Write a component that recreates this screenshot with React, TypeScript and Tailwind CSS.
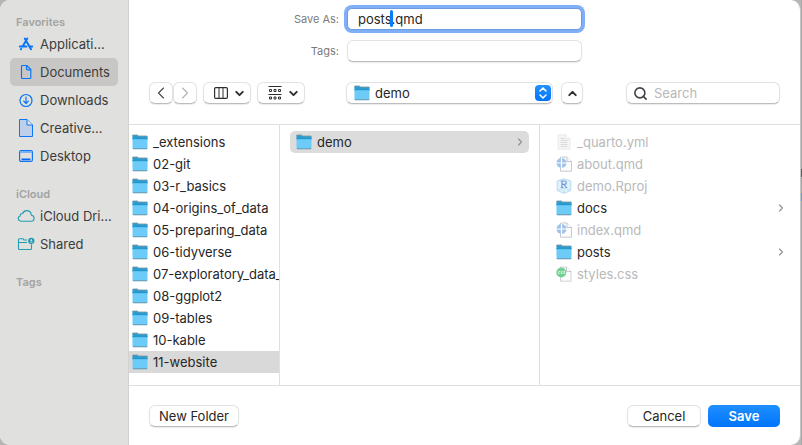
import React from "react";
import { ChevronDown, ChevronLeft, ChevronRight, ChevronUp, Search } from "lucide-react";

function FolderIcon() {
  return (
    <svg width="16" height="16" viewBox="0 0 16 16" className="shrink-0" aria-hidden="true">
      <path d="M.5 5V1.800Q.5 1 1.300 1H5q.6 0 1 .4l.6.6h8.100q.8 0 .8.8V5z" fill="#2c9ccf" />
      <path d="M.5 2.500V1.800Q.5 1 1.300 1H5q.6 0 1 .4l.6.6h8.100q.8 0 .8.800" fill="none" stroke="#7d9aa8" strokeWidth=".9" />
      <rect x=".5" y="4.500" width="15" height="10.500" rx=".6" fill="#6dcbf8" />
      <path d="M.5 4h15v1H.5z" fill="#2497cb" />
      <path d="M.5 5h15v1H.5z" fill="#5dc1f1" />
      <path d="M1 14.800h14" stroke="#6592a6" strokeWidth=".9" />
    </svg>
  );
}

function TextFileIcon() {
  return (
    <svg width="16" height="16" viewBox="0 0 16 16" className="shrink-0" aria-hidden="true">
      <path d="M2 .8h8l4 4v10.400H2z" fill="#f5f5f5" stroke="#e6e6e6" strokeWidth=".8" />
      <path d="M10 .8v4h4" fill="#fff" stroke="#e0e0e0" strokeWidth=".7" />
      <path d="M4.500 4.500h4M4.500 6.500h7M4.500 8.500h7M4.500 10.500h7M4.500 12.500h7" stroke="#d8d8d8" strokeWidth=".9" />
    </svg>
  );
}

function QuartoIcon() {
  return (
    <svg width="16" height="16" viewBox="0 0 16 16" className="shrink-0" aria-hidden="true">
      <path d="M4.500 1h6.500l4.500 4.500v9.700h-11z" fill="#fdfdfd" stroke="#c6c9cf" strokeWidth="1" />
      <path d="M11 1v4.500h4.500" fill="#fff" stroke="#c2c5cc" strokeWidth="1" />
      <circle cx="5.500" cy="7" r="5" fill="#a0c2e9" />
      <path d="M5.500 1.500v11M0 7h11" stroke="#fff" strokeWidth="1.200" />
    </svg>
  );
}

function RProjectIcon() {
  return (
    <svg width="16" height="16" viewBox="0 0 16 16" className="shrink-0" aria-hidden="true">
      <path d="M8 .8l6.800 2.200v9.500L8 15.300l-6.800-2.800V3z" fill="#dff2fb" stroke="#a6d5e8" strokeWidth=".8" />
      <path d="M1.200 12.500L8 10l6.800 2.500M8 10v5.300" fill="none" stroke="#b6dfee" strokeWidth=".8" />
      <path d="M6 9.500V3h2.600a1.700 1.700 0 0 1 0 3.400H6M8 6.500l2.300 3M4.800 3H6M4.800 9.500h2.400M9.500 9.500h1.700" fill="none" stroke="#7398d9" strokeWidth="1.200" />
    </svg>
  );
}

function CssIcon() {
  return (
    <svg width="16" height="16" viewBox="0 0 16 16" className="shrink-0" aria-hidden="true">
      <path d="M4.500 1h6l4.500 4.500v9.700H4.500z" fill="#fdfdfd" stroke="#ced1d0" strokeWidth="1" />
      <path d="M10.500 1v4.500H15" fill="#fff" stroke="#c5c8c7" strokeWidth="1" />
      <circle cx="5.300" cy="6.500" r="5" fill="#74cf95" />
      <path d="M3.800 5.500q-1.600-.4-1.600 1t1.600 1M6.400 5.300q-1.400-.2-1.400.6 0 .5.600.6t.6.600q0 .7-1.300.4M9 5.300q-1.400-.2-1.400.6 0 .5.600.6t.6.600q0 .7-1.300.4" fill="none" stroke="#fff" strokeWidth=".8" />
    </svg>
  );
}

const sideIcons = {
  apps: (
    <svg width="16" height="16" viewBox="0 0 16 16" fill="none" stroke="#0a76f5" strokeWidth="2" strokeLinecap="round" aria-hidden="true">
      <path d="M9.300 2.500L4.900 10M6.800 2.500l6.200 10.700M1.800 10.500h6.700M12.200 10.500h2M3.200 12.800l-.3.500" />
    </svg>
  ),
  document: (
    <svg width="16" height="16" viewBox="0 0 16 16" fill="none" stroke="#0a76f5" strokeWidth="1.200" strokeLinejoin="round" aria-hidden="true">
      <path d="M4.500 1.500h4.300l4 4v8q0 1-1 1H4.500q-1 0-1-1v-11q0-1 1-1zM8.500 1.500v3.300q0 1 1 1h3.300" />
    </svg>
  ),
  download: (
    <svg width="16" height="16" viewBox="0 0 16 16" fill="none" stroke="#0a76f5" strokeWidth="1.200" strokeLinecap="round" strokeLinejoin="round" aria-hidden="true">
      <circle cx="8" cy="8.500" r="6" />
      <path d="M8 5.200v6.200M5.700 9.200L8 11.500l2.300-2.300" />
    </svg>
  ),
  creative: (
    <svg width="16" height="20" viewBox="0 0 16 20" fill="#bed0e9" stroke="#0a76f5" strokeWidth="1" aria-hidden="true">
      <path d="M1.500 1.500h7.500l5.500 5.500v11.500h-13z" />
      <path d="M9 1.500V7h5.500" fill="#dfe6ee" />
    </svg>
  ),
  desktop: (
    <svg width="16" height="16" viewBox="0 0 16 16" aria-hidden="true">
      <rect x="1.600" y="2.600" width="12.800" height="10.800" rx="1.500" fill="none" stroke="#0a76f5" strokeWidth="1.200" />
      <path d="M2 3h12v2H2z" fill="#7eaff0" />
      <path d="M3.500 11.300h9" stroke="#0a66f5" strokeWidth="1.800" />
    </svg>
  ),
  cloud: (
    <svg width="18" height="16" viewBox="0 0 18 16" fill="none" stroke="#209db2" strokeWidth="1.100" strokeLinejoin="round" aria-hidden="true">
      <path d="M4.500 13.200h9.200a3 3 0 0 0 .7-6C14 4 12 2.600 9.800 2.600 7.600 2.600 6.200 4 5.700 5.500 3.900 5.300 3 6.600 3.200 7.900 0 8.900.8 13.200 4.500 13.200z" />
    </svg>
  ),
  shared: (
    <svg width="18" height="16" viewBox="0 0 18 16" fill="none" stroke="#209db2" strokeWidth="1.100" aria-hidden="true">
      <path d="M10 4H7L6 2.800H2.500q-1 0-1 1v8.700q0 1 1 1h11q1 0 1-1V8.500M1.500 6.500H10" />
      <circle cx="14.300" cy="5" r="2.600" fill="#209db2" />
      <circle cx="14.300" cy="4.200" r=".9" fill="#e0e0de" stroke="none" />
      <path d="M12.900 6.700q1.400-1.500 2.800 0" stroke="#e0e0de" strokeWidth=".8" />
    </svg>
  ),
};

type SideItem = { label: string; icon: keyof typeof sideIcons; selected?: boolean };

const sections: { title: string; items: SideItem[] }[] = [
  {
    title: "Favorites",
    items: [
      { label: "Applicati...", icon: "apps" },
      { label: "Documents", icon: "document", selected: true },
      { label: "Downloads", icon: "download" },
      { label: "Creative...", icon: "creative" },
      { label: "Desktop", icon: "desktop" },
    ],
  },
  {
    title: "iCloud",
    items: [
      { label: "iCloud Dri...", icon: "cloud" },
      { label: "Shared", icon: "shared" },
    ],
  },
  { title: "Tags", items: [] },
];

const folders = [
  "_extensions",
  "02-git",
  "03-r_basics",
  "04-origins_of_data",
  "05-preparing_data",
  "06-tidyverse",
  "07-exploratory_data_",
  "08-ggplot2",
  "09-tables",
  "10-kable",
  "11-website",
];

const files = [
  { name: "_quarto.yml", icon: <TextFileIcon /> },
  { name: "about.qmd", icon: <QuartoIcon /> },
  { name: "demo.Rproj", icon: <RProjectIcon /> },
  { name: "docs", icon: <FolderIcon />, folder: true },
  { name: "index.qmd", icon: <QuartoIcon /> },
  { name: "posts", icon: <FolderIcon />, folder: true },
  { name: "styles.css", icon: <CssIcon /> },
];

const control =
  "h-[22px] rounded-md border border-[#e2e2e2] border-b-[#bdbdbd] bg-white shadow-[0_1px_1px_rgba(0,0,0,0.08)]";

function Sidebar() {
  return (
    <nav aria-label="Locations" className="flex w-[129px] shrink-0 flex-col gap-4 border-r border-[#d2d2d0] bg-[#e0e0de] px-[10px] pt-[14px]">
      {sections.map((section) => (
        <section key={section.title}>
          <h2 className="px-[6px] text-[11px] leading-4 font-semibold text-[#a3a3a2]">{section.title}</h2>
          {section.items.map((item) => (
            <button
              key={item.label}
              type="button"
              className={`flex h-7 w-full items-center gap-1 rounded-[5px] pl-[6px] text-left whitespace-nowrap text-[#3c3c3b] ${item.selected ? "bg-[#c9c7c6]" : ""}`}
            >
              <span className="flex w-5 shrink-0 justify-center">{sideIcons[item.icon]}</span>
              {item.label}
            </button>
          ))}
        </section>
      ))}
    </nav>
  );
}

function NameForm() {
  return (
    <div className="grid grid-cols-[1fr_235px_1fr] items-center gap-x-2 gap-y-[10px] pt-2">
      <label htmlFor="save-as" className="text-right text-[11px] text-[#7b7b7b]">Save As:</label>
      <div className="relative flex">
        <input
          id="save-as"
          defaultValue="posts.qmd"
          className="h-[22px] w-full rounded-[5px] border border-[#6d9de0] bg-white px-[10px] ring-3 ring-[#7eaff7] outline-none"
        />
        <span className="absolute top-[2px] left-[43px] h-[17px] w-[3px] rounded-full bg-[#0a7aff]" />
      </div>
      <span />
      <label htmlFor="tags" className="text-right text-[11px] text-[#7b7b7b]">Tags:</label>
      <input id="tags" className={`${control} w-full px-[10px] outline-none`} />
    </div>
  );
}

function Toolbar() {
  return (
    <div className="flex gap-2 px-5 py-5">
      <div className="flex flex-1">
        <button type="button" aria-label="Back" className={`${control} flex w-6 items-center justify-center text-[#4c4c4c]`}>
          <ChevronLeft size={20} strokeWidth={1.4} />
        </button>
        <button type="button" aria-label="Forward" className={`${control} flex w-6 items-center justify-center text-[#b5b5b5]`}>
          <ChevronRight size={20} strokeWidth={1.4} />
        </button>
        <button type="button" aria-label="Column view" className={`${control} ml-[6px] flex w-12 items-center justify-between pr-1 pl-[10px] text-[#2e2e2e]`}>
          <svg width="14" height="12" viewBox="0 0 14 12" fill="none" stroke="currentColor" aria-hidden="true">
            <rect x=".6" y=".6" width="12.800" height="10.800" rx="1.200" strokeWidth="1.200" />
            <path d="M5 1v10M9 1v10" />
          </svg>
          <ChevronDown size={13} strokeWidth={3.6} />
        </button>
        <button type="button" aria-label="Group items" className={`${control} ml-[6px] flex w-12 items-center justify-between pr-1 pl-[10px] text-[#2e2e2e]`}>
          <svg width="14" height="14" viewBox="0 0 14 14" fill="none" stroke="currentColor" aria-hidden="true">
            <path d="M.5 .5h13M.5 8.500h13" />
            <path d="M1.500 3.500h2v2h-2zM6 3.500h2v2H6zM10.500 3.500h2v2h-2zM1.500 11h2v2h-2zM6 11h2v2H6zM10.500 11h2v2h-2z" />
          </svg>
          <ChevronDown size={13} strokeWidth={3.6} />
        </button>
      </div>
      <div className="flex w-[237px] gap-2">
        <div className="relative flex flex-1">
          <select aria-label="Folder" className={`${control} w-full appearance-none pl-7 outline-none`}>
            <option>demo</option>
          </select>
          <span className="pointer-events-none absolute top-[3px] left-2">
            <FolderIcon />
          </span>
          <span className="pointer-events-none absolute top-[3px] right-[2px] flex h-4 w-4 items-center justify-center rounded bg-linear-to-b from-[#2492ff] to-[#0073fa]">
            <svg width="8" height="12" viewBox="0 0 8 12" fill="none" stroke="#fff" strokeWidth="1.500" strokeLinecap="round" strokeLinejoin="round" aria-hidden="true">
              <path d="M1 4l3-3 3 3M1 8l3 3 3-3" />
            </svg>
          </span>
        </div>
        <button type="button" aria-label="Collapse browser" className={`${control} flex w-[22px] items-center justify-center text-[#2e2e2e]`}>
          <ChevronUp size={13} strokeWidth={3.6} className="shrink-0" />
        </button>
      </div>
      <div className="flex flex-1 justify-end">
        <label className={`${control} flex w-[154px] items-center gap-[6px] pl-[6px]`}>
          <Search size={15} strokeWidth={2.6} className="shrink-0 text-[#444]" />
          <input type="search" aria-label="Search" placeholder="Search" className="w-full min-w-0 bg-transparent outline-none placeholder:text-[#b8b8b8]" />
        </label>
      </div>
    </div>
  );
}

function Browser() {
  return (
    <div className="grid flex-1 grid-cols-[151px_1fr_1fr] border-y border-[#dfdfdf] text-[#262626]">
      <ul className="overflow-hidden border-r border-[#dfdfdf] py-[6px]">
        {folders.map((name) => (
          <li key={name}>
            <button
              type="button"
              className={`flex h-[22px] w-full items-center gap-[5px] pl-[3px] whitespace-nowrap ${name === "11-website" ? "bg-[#d9d9d9]" : ""}`}
            >
              <FolderIcon />
              {name}
            </button>
          </li>
        ))}
      </ul>
      <ul className="border-r border-[#dfdfdf] px-[10px] py-[6px]">
        <li>
          <button type="button" className="flex h-[22px] w-full items-center gap-[5px] rounded-[5px] bg-[#dcdcdc] pr-[3px] pl-[6px]">
            <FolderIcon />
            demo
            <ChevronRight size={12} strokeWidth={2.2} className="ml-auto text-[#8e8e8e]" />
          </button>
        </li>
      </ul>
      <ul className="px-[10px] py-[6px]">
        {files.map((file) => (
          <li key={file.name}>
            <button
              type="button"
              disabled={!file.folder}
              className={`flex h-[22px] w-full items-center gap-[5px] pr-[3px] pl-[6px] ${file.folder ? "" : "text-[#b9b9b9]"}`}
            >
              {file.icon}
              {file.name}
              {file.folder && <ChevronRight size={12} strokeWidth={2.2} className="ml-auto text-[#8e8e8e]" />}
            </button>
          </li>
        ))}
      </ul>
    </div>
  );
}

export default function App() {
  return (
    <div className="flex min-h-screen bg-[#b6b6b6] font-['Inter','Liberation_Sans',sans-serif] text-[13px] leading-4 text-[#262626]">
      <main className="flex flex-1 overflow-hidden rounded-[10px] border-r border-[#c4c4c4] bg-white">
        <Sidebar />
        <div className="flex min-w-0 flex-1 flex-col">
          <NameForm />
          <Toolbar />
          <Browser />
          <footer className="flex gap-[7px] px-5 pt-[19px] pb-[18px]">
            <button type="button" className={`${control} mr-auto w-[90px]`}>New Folder</button>
            <button type="button" className={`${control} w-[74px]`}>Cancel</button>
            <button type="button" className="h-[22px] w-[72px] rounded-[5px] bg-linear-to-b from-[#1f8fff] to-[#0074fb] font-semibold text-white">
              Save
            </button>
          </footer>
        </div>
      </main>
      <div className="w-px bg-[#a8a8a8] pt-[169px]">
        <div className="h-2 bg-[#5c5c5c]" />
        <div className="mt-4 h-2 bg-[#7194cf]" />
      </div>
    </div>
  );
}
